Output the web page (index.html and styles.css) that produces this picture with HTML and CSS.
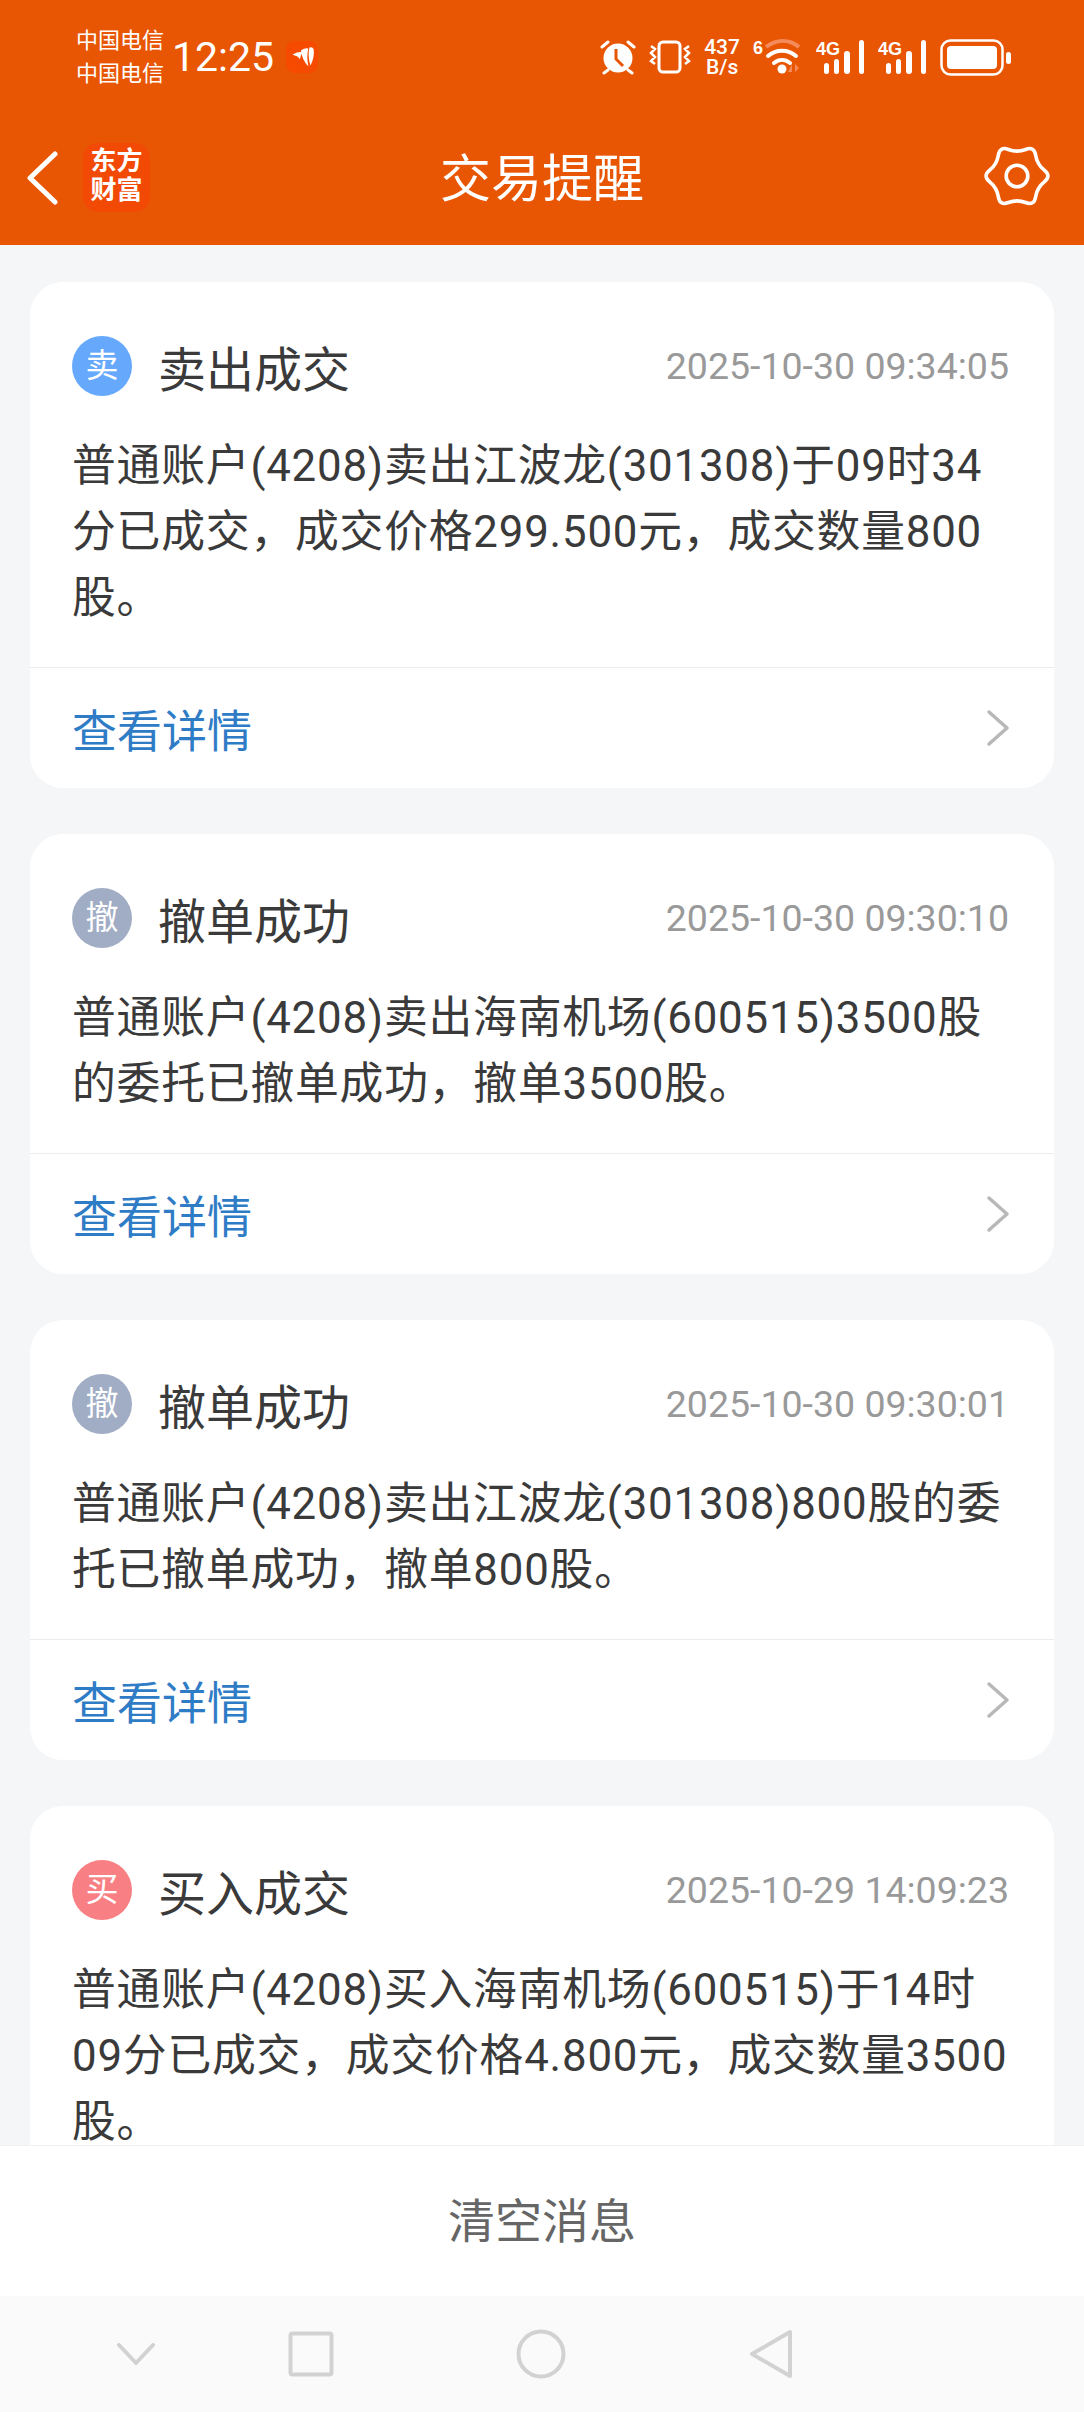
FILE: index.html
```html
<!DOCTYPE html>
<html lang="zh-CN">

<head>
    <meta charset="UTF-8">
    <meta name="viewport" content="width=device-width, initial-scale=1.0">
    <title>交易提醒</title>
    <link rel="stylesheet" href="styles.css">
</head>

<body>
    <div class="page">
        <header class="topBar">
            <div class="statusBar">
                <div class="carriers">
                    <span>中国电信</span>
                    <span>中国电信</span>
                </div>
                <span class="clock">12:25</span>
                <svg class="appBadge" viewBox="0 0 30 30">
                    <rect width="30" height="30" rx="8" fill="#f54a00" />
                    <path d="M6 13Q10 10 15 10L13 17Q11 14 6 13Z M14 9Q18 6 21 7Q19 14 21 24Q15 18 14 9Z M22 6Q25 5 26 8Q27 15 23 23Q20 14 22 6Z" fill="#fff" />
                </svg>
                <div class="statusIcons">
                    <svg class="icon" width="36" height="36" viewBox="0 0 36 36">
                        <circle cx="18" cy="19" r="14.5" fill="#fff" />
                        <path d="M16 10v10l7 7" fill="none" stroke="#e85604" stroke-width="3" />
                        <path d="M2 8l6-5M34 8l-6-5M8 31l-4 3M28 31l4 3" stroke="#fff" stroke-width="3" stroke-linecap="round" />
                    </svg>
                    <svg class="icon" width="42" height="34" viewBox="0 0 42 34">
                        <rect x="10" y="2" width="21" height="30" rx="4" fill="none" stroke="#fff" stroke-width="3" />
                        <path d="M2 6l4 3-4 4 4 4-4 4 4 3M40 6l-4 3 4 4-4 4 4 4-4 3" fill="none" stroke="#fff" stroke-width="2.5" />
                    </svg>
                    <div class="netSpeed">
                        <span>437</span>
                        <span>B/s</span>
                    </div>
                    <svg class="icon" width="50" height="40" viewBox="0 0 50 40">
                        <text x="0" y="17" class="iconLabel">6</text>
                        <path d="M13 10c11-8 23-8 33 0" fill="none" stroke="#f58a5a" stroke-width="4" />
                        <path d="M15 19c8-7 20-7 28 0M21 26c5-4 11-4 16 0" fill="none" stroke="#fff" stroke-width="4" stroke-linecap="round" />
                        <circle cx="29" cy="32" r="4.5" fill="#fff" />
                        <path d="M39 35v-8l-4 8zM42 27v8l4-4z" fill="#f58a5a" />
                    </svg>
                    <svg class="icon signal" width="49" height="38" viewBox="0 0 49 38">
                        <text x="0" y="17" class="iconLabel">4G</text>
                        <rect x="8" y="25" width="5" height="11" rx="2.5" fill="#fff" />
                        <rect x="18" y="21" width="5" height="15" rx="2.5" fill="#fff" />
                        <rect x="28" y="13" width="6" height="23" rx="3" fill="#fff" />
                        <rect x="43" y="2" width="5" height="34" rx="2.5" fill="#fff" />
                    </svg>
                    <svg class="icon signal" width="49" height="38" viewBox="0 0 49 38">
                        <text x="0" y="17" class="iconLabel">4G</text>
                        <rect x="8" y="25" width="5" height="11" rx="2.5" fill="#fff" />
                        <rect x="18" y="21" width="5" height="15" rx="2.5" fill="#fff" />
                        <rect x="28" y="13" width="6" height="23" rx="3" fill="#fff" />
                        <rect x="43" y="2" width="5" height="34" rx="2.5" fill="#fff" />
                    </svg>
                    <svg class="icon" width="71" height="37" viewBox="0 0 71 37">
                        <rect x="1.5" y="1.5" width="61" height="34" rx="9" fill="none" stroke="#fff" stroke-width="2.5" />
                        <rect x="7" y="7" width="50" height="23" rx="4" fill="#fff" />
                        <rect x="66" y="13" width="5" height="12" rx="2.5" fill="#fff" />
                    </svg>
                </div>
            </div>
            <nav class="titleBar">
                <svg class="backIcon" width="32" height="54" viewBox="0 0 32 54">
                    <polyline points="29,3 4,27 29,51" fill="none" stroke="#fff" stroke-width="5" stroke-linecap="round" stroke-linejoin="round" />
                </svg>
                <div class="brand">东方<br>财富</div>
                <h1 class="pageTitle">交易提醒</h1>
                <svg class="gearIcon" width="68" height="68" viewBox="-33 -33 66 66">
                    <path d="M26.5 -5.63Q33.5 0 26.5 5.63Q19.49 11.25 18.12 20.13Q16.75 29.01 8.38 25.76Q0 22.5 -8.38 25.76Q-16.75 29.01 -18.12 20.13Q-19.49 11.25 -26.5 5.63Q-33.5 0 -26.5 -5.63Q-19.49 -11.25 -18.12 -20.13Q-16.75 -29.01 -8.38 -25.76Q0 -22.5 8.38 -25.76Q16.75 -29.01 18.12 -20.13Q19.49 -11.25 26.5 -5.63Z" fill="none" stroke="#fff" stroke-width="3.5" stroke-linejoin="round" />
                    <circle r="10.5" fill="none" stroke="#fff" stroke-width="3.5" />
                </svg>
            </nav>
        </header>

        <main class="messageList">
            <article class="card">
                <div class="cardHead">
                    <span class="tag tagSell">卖</span>
                    <span class="cardTitle">卖出成交</span>
                    <time class="cardTime">2025-10-30 09:34:05</time>
                </div>
                <p class="cardText">普通账户(4208)卖出江波龙(301308)于09时34分已成交，成交价格299.500元，成交数量800股。</p>
                <a class="cardLink">查看详情
                    <svg width="24" height="38" viewBox="0 0 24 38"><polyline points="3,3 21,19 3,35" fill="none" stroke="#b8b8b8" stroke-width="3.5" stroke-linecap="round" stroke-linejoin="round" /></svg>
                </a>
            </article>
            <article class="card">
                <div class="cardHead">
                    <span class="tag tagCancel">撤</span>
                    <span class="cardTitle">撤单成功</span>
                    <time class="cardTime">2025-10-30 09:30:10</time>
                </div>
                <p class="cardText">普通账户(4208)卖出海南机场(600515)3500股的委托已撤单成功，撤单3500股。</p>
                <a class="cardLink">查看详情
                    <svg width="24" height="38" viewBox="0 0 24 38"><polyline points="3,3 21,19 3,35" fill="none" stroke="#b8b8b8" stroke-width="3.5" stroke-linecap="round" stroke-linejoin="round" /></svg>
                </a>
            </article>
            <article class="card">
                <div class="cardHead">
                    <span class="tag tagCancel">撤</span>
                    <span class="cardTitle">撤单成功</span>
                    <time class="cardTime">2025-10-30 09:30:01</time>
                </div>
                <p class="cardText">普通账户(4208)卖出江波龙(301308)800股的委托已撤单成功，撤单800股。</p>
                <a class="cardLink">查看详情
                    <svg width="24" height="38" viewBox="0 0 24 38"><polyline points="3,3 21,19 3,35" fill="none" stroke="#b8b8b8" stroke-width="3.5" stroke-linecap="round" stroke-linejoin="round" /></svg>
                </a>
            </article>
            <article class="card">
                <div class="cardHead">
                    <span class="tag tagBuy">买</span>
                    <span class="cardTitle">买入成交</span>
                    <time class="cardTime">2025-10-29 14:09:23</time>
                </div>
                <p class="cardText">普通账户(4208)买入海南机场(600515)于14时09分已成交，成交价格4.800元，成交数量3500股。</p>
            </article>
        </main>

        <div class="clearBar">清空消息</div>

        <footer class="navBar">
            <svg width="38" height="22" viewBox="0 0 38 22"><polyline points="2,2 19,20 36,2" fill="none" stroke="#d2d2d2" stroke-width="4" stroke-linejoin="round" stroke-linecap="round" /></svg>
            <svg width="46" height="46" viewBox="0 0 46 46"><rect x="2.5" y="2.5" width="41" height="41" rx="2" fill="none" stroke="#d2d2d2" stroke-width="4" /></svg>
            <svg width="50" height="50" viewBox="0 0 50 50"><circle cx="25" cy="25" r="22.5" fill="none" stroke="#d2d2d2" stroke-width="4" /></svg>
            <svg width="44" height="50" viewBox="0 0 44 50"><polygon points="41,3 41,47 3,25" fill="none" stroke="#d2d2d2" stroke-width="4" stroke-linejoin="round" /></svg>
        </footer>
    </div>
</body>

</html>
```

FILE: styles.css
```css
body,
html {
    margin: 0;
    height: 100%;
    font-family: Roboto, 'Noto Sans CJK SC', sans-serif;
}

.page {
    display: flex;
    flex-direction: column;
    height: 100vh;
    overflow: hidden;
    background-color: #f5f6f8;
}

.topBar {
    flex: none;
    height: 245px;
    background-color: #e85604;
    color: #fff;
}

.statusBar {
    display: flex;
    align-items: center;
    height: 114px;
    padding: 0 73px 0 76px;
}

.carriers {
    display: flex;
    flex-direction: column;
    font-size: 22px;
    line-height: 33px;
}

.clock {
    margin-left: 8px;
    font-size: 41px;
    font-weight: 400;
}

.appBadge {
    width: 32px;
    height: 32px;
    margin-left: 12px;
}

.statusIcons {
    display: flex;
    align-items: center;
    gap: 13px;
    margin-left: auto;
}

.iconLabel {
    font-family: 'Liberation Sans', sans-serif;
    font-size: 18px;
    font-weight: 700;
    fill: #fff;
}

.netSpeed {
    display: flex;
    flex-direction: column;
    align-items: center;
    font-size: 21px;
    font-weight: 500;
    line-height: 20px;
}

.titleBar {
    position: relative;
    display: flex;
    align-items: center;
    height: 131px;
    padding: 0 33px 0 26px;
}

.backIcon {
    flex: none;
    margin-bottom: 3px;
}

.brand {
    width: 67px;
    height: 69px;
    margin: 0 0 4px 25px;
    border-radius: 15px;
    background-color: #f24a05;
    font-size: 26px;
    font-weight: 700;
    line-height: 29px;
    text-align: center;
    padding-top: 4px;
    box-sizing: border-box;
}

.pageTitle {
    position: absolute;
    left: 0;
    right: 0;
    margin: 0;
    font-size: 51px;
    font-weight: 400;
    line-height: 64px;
    text-align: center;
}

.gearIcon {
    margin: 0 0 7px auto;
}

.messageList {
    flex: 1;
    display: flex;
    flex-direction: column;
    gap: 46px;
    min-height: 0;
    overflow: hidden;
    padding: 37px 30px 0;
}

.card {
    flex: none;
    background-color: #fff;
    border-radius: 33px;
}

.cardHead {
    display: flex;
    align-items: center;
    height: 60px;
    padding: 54px 45px 0 42px;
}

.tag {
    flex: none;
    width: 60px;
    height: 60px;
    border-radius: 50%;
    color: #fff;
    font-size: 33px;
    line-height: 60px;
    text-align: center;
}

.tagSell {
    background-color: #66a8fb;
}

.tagCancel {
    background-color: #a1adc4;
}

.tagBuy {
    background-color: #f87f83;
}

.cardTitle {
    margin-left: 26px;
    color: #3a3a3a;
    font-size: 48px;
}

.cardTime {
    margin-left: auto;
    color: #999;
    font-size: 37.5px;
}

.cardText {
    margin: 37px 42px 36px 42px;
    color: #3a3a3a;
    font-size: 43.8px;
    letter-spacing: 0.8px;
    line-height: 66px;
}

.cardLink {
    display: flex;
    align-items: center;
    justify-content: space-between;
    height: 120px;
    padding: 0 44px 0 42px;
    border-top: 1px solid #ececec;
    color: #2f7cc6;
    font-size: 45px;
}

.clearBar {
    flex: none;
    height: 151px;
    border-top: 1px solid #f0f0f0;
    box-sizing: border-box;
    background-color: #fff;
    color: #666;
    font-size: 47px;
    line-height: 151px;
    text-align: center;
}

.navBar {
    flex: none;
    display: grid;
    grid-template-columns: 120px 230px 230px 230px;
    align-items: center;
    justify-items: center;
    height: 116px;
    padding: 0 0 0 76px;
    box-sizing: border-box;
    background-color: #fafafa;
}
```
